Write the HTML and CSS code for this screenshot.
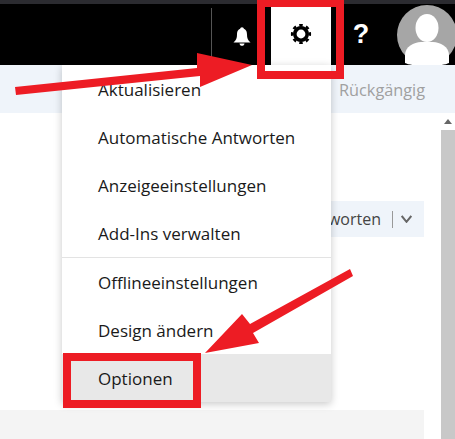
FILE: index.html
```html
<!DOCTYPE html>
<html lang="de">

<head>
  <meta charset="UTF-8">
  <meta name="viewport" content="width=device-width, initial-scale=1.0">
  <title>Optionen</title>
  <link rel="stylesheet" href="styles.css">
</head>

<body>
  <div class="page-wrapper">
    <header class="topbar">
      <div class="tile tile-bell">
        <svg width="18" height="19" viewBox="0 0 18 19">
          <circle cx="9" cy="2" r="1.8" fill="#fff"/>
          <path d="M9 1.5C5.5 1.5 4 4 4 7.500C4 11 3.200 13 .5 15.500H17.500C14.800 13 14 11 14 7.500C14 4 12.500 1.500 9 1.500Z" fill="#fff"/>
          <path d="M6.500 16.500H11.500C11.300 18 10.300 18.800 9 18.800C7.700 18.800 6.700 18 6.500 16.500Z" fill="#fff"/>
        </svg>
      </div>
      <div class="tile tile-active">
        <svg width="22" height="22" viewBox="-11 -11 22 22">
          <circle r="6.200" fill="none" stroke="#000" stroke-width="3.600"/>
          <circle r="8.800" fill="none" stroke="#000" stroke-width="2.600" pathLength="80" stroke-dasharray="5 5" stroke-dashoffset="2.500"/>
        </svg>
      </div>
      <div class="tile tile-help">?</div>
      <div class="avatar">
        <svg width="60" height="60" viewBox="0 0 60 60">
          <circle cx="30" cy="30" r="30" fill="#a6a6a6"/>
          <ellipse cx="30" cy="23" rx="11.500" ry="14" fill="#fff"/>
          <path d="M8 58V50C8 42 17 37 24 37H36C43 37 52 42 52 50V58C44 62 16 62 8 58Z" fill="#fff"/>
        </svg>
      </div>
    </header>

    <div class="toolbar">
      <span class="undo">Rückgängig</span>
    </div>

    <div class="content">
      <main class="mail">
        <div class="reply-bar">
          <span class="reply-text">worten</span>
          <span class="reply-sep"></span>
          <svg width="11" height="8" viewBox="0 0 11 8">
            <path d="M.7 1L5.500 6.800L10.300 1" fill="none" stroke="#666" stroke-width="2"/>
          </svg>
        </div>
        <div class="mail-footer"></div>
      </main>
      <aside class="scrollbar">
        <div class="scroll-up">
          <svg width="8" height="5" viewBox="0 0 8 5"><path d="M0 5L4 0L8 5Z" fill="#666"/></svg>
        </div>
        <div class="scroll-track"></div>
      </aside>
    </div>

    <ul class="settings-menu">
      <li>Aktualisieren</li>
      <li>Automatische Antworten</li>
      <li>Anzeigeeinstellungen</li>
      <li class="group-end">Add-Ins verwalten</li>
      <li>Offlineeinstellungen</li>
      <li>Design ändern</li>
      <li class="selected">Optionen</li>
    </ul>

    <!-- annotations drawn on top of the screenshot -->
    <div class="mark mark-gear"></div>
    <div class="mark mark-options"></div>
    <svg class="arrows" width="455" height="439" viewBox="0 0 455 439">
      <path d="M15 87L197 68L197 53L252 65L200 87L200 76L16 95Z" fill="#ed1c24"/>
      <path d="M350 269L353 276L253 333L259 343L205 353L242 314L250 324Z" fill="#ed1c24"/>
    </svg>
  </div>
</body>

</html>
```

FILE: styles.css
```css
* {
  margin: 0;
  padding: 0;
  box-sizing: border-box;
  font-family: "Open Sans", sans-serif;
}

html,
body {
  height: 100%;
  width: 100%;
  overflow: hidden;
}

.page-wrapper {
  height: 439px;
  width: 455px;
  position: relative;
  overflow: hidden;
  display: flex;
  flex-direction: column;
  background-color: #fff;
}

.topbar {
  height: 65px;
  display: flex;
  justify-content: flex-end;
  padding-top: 4px;
  background-color: #000;
  border-top: 4px solid #2b2b30;
}

.tile {
  width: 60px;
  display: flex;
  align-items: center;
  justify-content: center;
}

.tile-bell {
  height: 51px;
  padding-top: 5px;
  border-left: 1px solid #555;
}

.tile-active {
  background-color: #fff;
  margin-top: -1px;
  padding-bottom: 5px;
}

.tile-help {
  font-family: "Liberation Sans", sans-serif;
  font-size: 27px;
  font-weight: 700;
  color: #fff;
  padding-bottom: 5px;
}

.avatar {
  width: 60px;
  height: 60px;
  margin: -3px -2px 0 6px;
}

.toolbar {
  height: 48px;
  display: flex;
  align-items: center;
  padding-left: 339px;
  padding-top: 2px;
  background-color: #eff4fa;
}

.undo {
  font-size: 16.300px;
  color: #a0a0a0;
}

.content {
  flex: 1;
  display: flex;
}

.mail {
  width: 424px;
  margin-right: 17px;
  display: flex;
  flex-direction: column;
}

.reply-bar {
  height: 36px;
  margin-top: 88px;
  margin-left: 300px;
  display: flex;
  align-items: center;
  justify-content: flex-end;
  padding-right: 12px;
  background-color: #eff4fa;
  font-size: 16px;
  color: #444;
}

.reply-sep {
  width: 1px;
  height: 17px;
  margin: 0 8px 0 11px;
  background-color: #999;
}

.mail-footer {
  height: 29px;
  margin-top: auto;
  background-color: #f4f4f4;
}

.scrollbar {
  width: 14px;
  display: flex;
  flex-direction: column;
}

.scroll-up {
  height: 17px;
  display: flex;
  align-items: center;
  justify-content: center;
}

.scroll-track {
  flex: 1;
  background-color: #c8c8c8;
}

.settings-menu {
  position: absolute;
  left: 62px;
  top: 65px;
  width: 269px;
  height: 337px;
  list-style: none;
  background-color: #fff;
  box-shadow: 0 2px 8px rgba(0, 0, 0, 0.22);
}

.settings-menu li {
  height: 48px;
  line-height: 50px;
  padding-left: 36px;
  font-size: 17px;
  color: #1a1a1a;
}

.settings-menu .group-end {
  height: 49px;
  border-bottom: 1px solid #e3e3e3;
}

.settings-menu .selected {
  background-color: #e8e8e8;
}

.mark {
  position: absolute;
  border: 8px solid #ed1c24;
}

.mark-gear {
  left: 257px;
  top: -1px;
  width: 87px;
  height: 80px;
}

.mark-options {
  left: 63px;
  top: 353px;
  width: 138px;
  height: 55px;
}

.arrows {
  position: absolute;
  left: 0;
  top: 0;
}
```
